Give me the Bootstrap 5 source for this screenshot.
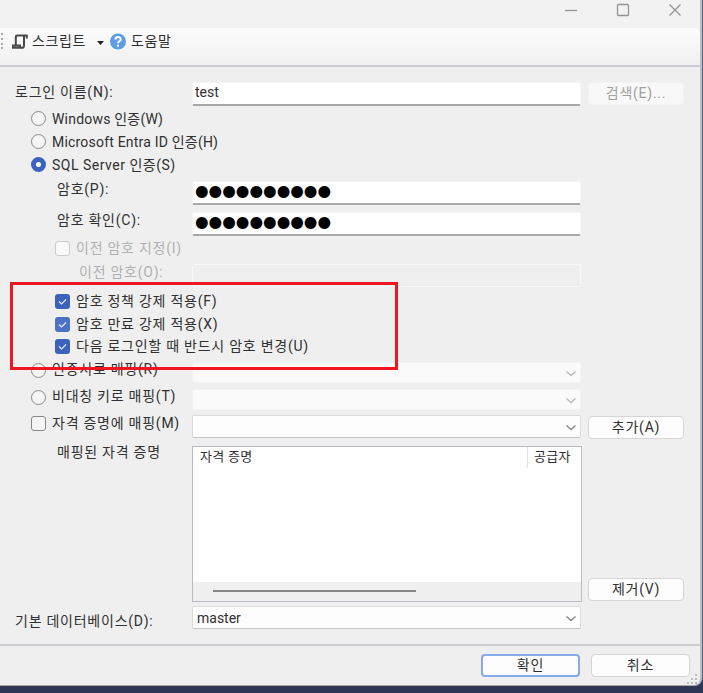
<!DOCTYPE html>
<html lang="ko">
<head>
<meta charset="utf-8">
<meta name="viewport" content="width=device-width, initial-scale=1">
<title>로그인 속성</title>
<link href="https://cdn.jsdelivr.net/npm/bootstrap@5.3.0/dist/css/bootstrap.min.css" rel="stylesheet">
<style>
body{width:703px;height:693px;overflow:hidden;background:#2d3653;font:14px/20px Roboto,"Noto Sans CJK KR",sans-serif;color:#303030;white-space:nowrap}
.win{width:702px;height:686px;background:#efefef;border-right:2px solid #bdbdc3;border-bottom:1px solid #a5a7ad;border-bottom-right-radius:8px;box-shadow:1px 0 #5d6585}
.titlebar{height:28px;background:#f2f2f2;padding-right:18px;gap:38px}
.tools{height:37px;background:linear-gradient(#fcfcfc,#f0f0f0);border-top-right-radius:5px;padding:0 0 11px 1px}
.main{height:581px;border-top:2px solid #cbcbd1;border-bottom:2px solid #cdced2;padding:13px 0 0 15px}
.line{display:flex;align-items:center}
.cap{width:177px;flex:none;letter-spacing:.75px}
.cap.n1{letter-spacing:.2px}.cap.n2{letter-spacing:.5px}
.up{padding-bottom:7px}
.first{padding-bottom:3px}
.i1{padding-left:16px}.i2{padding-left:42px}.i3{padding-left:40px}.i4{padding-left:64px}
.h27{height:27px}.h23{height:23px}.h22{height:22px}.h31{height:31px}.h18{height:18px}
.field{width:389px;height:24px;flex:none;background:#fff;border:1px solid #f5f5f5;border-bottom:2px solid #a9a9a9;border-radius:2px;padding-left:2px;line-height:18px}
.field.off{background:#efefef;border:1px solid #f8f8f8;height:23px}
.combo{width:389px;height:23px;flex:none;background:#fdfdfd;border:1px solid #dadada;border-bottom-color:#c4c4c4;border-radius:2px;padding:0 3px 0 4px;display:flex;justify-content:space-between;align-items:center;line-height:18px}
.combo.off{background:#fafafa;border-color:#f4f4f4;height:21px}
.combo svg{flex:none;margin-top:2px}
.pwd{font:15.6px/18px "DejaVu Sans",sans-serif;color:#000}
.pb{width:96px;height:23px;padding:0 0 2px;margin-left:7px;background:#fdfdfd;border:1px solid #d5d5d5;border-radius:4px;font-size:14px;line-height:20px;letter-spacing:.75px;color:#303030;flex:none}
.pb.off{background:#f8f8f8;border-color:#f3f3f3;color:#a0a0a0}
.rd,.ck{width:15px;height:15px;border:1px solid #888;border-radius:50%;background:#f5f5f5;margin-right:6px;flex:none}
.ck{border-radius:3px;margin-top:1px}
.rd.on{border:5px solid #3c62bd;background:#fff}
.ck.on{border:0;background:#3d62bb}.ck.mid{background:#4b72c4}
.ck svg{display:block}
.ck.off{border-color:#ccc;background:#f9f9f9}
.dim{color:#b1b1b1}
.grid{width:390px;height:156px;background:#fff;border:1px solid #b9bac4;font-size:13px;line-height:19px;letter-spacing:.3px}
.ghead{height:21px;padding-left:7px}
.gcol{width:54px;border-left:1px solid #e2e2e2;padding-left:6px}
.gscroll{height:19px;background:#f0f0f0;padding:8px 0 0 20px}
.thumb{width:203px;height:2px;background:#868686}
.foot{height:39px;padding:0 10px 0 0}
.foot .pb{width:99px;margin-left:11px}
.pb.def{border:2px solid #86a9e8;line-height:18px}
.box{left:10px;top:282px;width:388px;height:88px;border:3px solid #ee1620}
.grip{right:2px;top:674px}
.pwsec{padding-top:1px}
.pwold{height:29px;margin:4px 0 -2px}
.polsec{padding-top:1px}
.mapsec{padding-top:2px}
.mapsec .rd{margin-top:2px}
.add{margin-top:2px}
.listrow{margin-top:6px}
.listrow .cap{margin-top:-4px}
.rem{margin-bottom:1px;margin-left:6px}
.dbrow{height:23px;margin-top:4px}
.dbl{padding-top:6px}
.t1{letter-spacing:.6px}
.scr{margin-left:3px}.arr{margin-left:11px}.help{margin:0 5px}
</style>
<script src="https://cdn.jsdelivr.net/npm/bootstrap@5.3.0/dist/js/bootstrap.bundle.min.js"></script>
</head>
<body>
<div class="win position-relative">
  <div class="titlebar d-flex justify-content-end align-items-center">
    <svg width="14" height="14" class="mb-2" fill="none" stroke="#949494" stroke-width="1.3"><path d="M1 7.5h12"/></svg>
    <svg width="14" height="14" class="mb-2" fill="none" stroke="#949494" stroke-width="1.3"><rect x="1.5" y="1.5" width="11" height="11" rx="1"/></svg>
    <svg width="14" height="14" class="mb-2" fill="none" stroke="#949494" stroke-width="1.3"><path d="m1.5 1.5 11 11m0-11-11 11"/></svg>
  </div>
  <div class="tools d-flex align-items-center">
    <svg width="3" height="18" fill="#aaa"><path d="M0 1h2v2H0zm0 5h2v2H0zm0 5h2v2H0zm0 4h2v2H0z"/></svg>
    <svg width="17" height="17" viewBox="0 0 17 17" class="ms-2" fill="none" stroke="#484848" stroke-width="2"><path d="M14.8 5.4V2.5H5.2c-1 0-1.4.5-1.4 1.4V12M12 3v9.4c0 1.6-.7 2.4-2.2 2.4H1V12.6h7v1.9"/></svg>
    <span class="t1 scr">스크립트</span>
    <svg width="7" height="4" class="mt-1 arr"><path d="M0 0h7L3.5 4z" fill="#222"/></svg>
    <svg width="17" height="17" viewBox="0 0 17 17" class="help"><circle cx="9" cy="8.5" r="8" fill="#5d9de3"/><path d="M6.4 6.6C6.4 3.1 11.7 3 11.7 6.2c0 2-2.7 2-2.7 4M9 11.7v2" fill="none" stroke="#fff" stroke-width="2"/></svg>
    <span class="t1">도움말</span>
  </div>
  <div class="main">
    <div class="line h27"><div class="cap first">로그인 이름(N):</div><div class="field">test</div><button class="btn pb off">검색(E)...</button></div>
    <div class="line h23"><div class="cap line i1 n1"><i class="rd"></i>Windows 인증(W)</div></div>
    <div class="line h23"><div class="cap line i1 n1"><i class="rd"></i>Microsoft Entra ID 인증(H)</div></div>
    <div class="line h23"><div class="cap line i1 n2"><i class="rd on"></i>SQL Server 인증(S)</div></div>
    <div class="pwsec">
      <div class="line h31"><div class="cap up i2">암호(P):</div><div class="field pwd">●●●●●●●●●●</div></div>
      <div class="line h31"><div class="cap up i2">암호 확인(C):</div><div class="field pwd">●●●●●●●●●●</div></div>
      <div class="line h18 dim"><div class="cap line i3"><i class="ck off"></i>이전 암호 지정(I)</div></div>
      <div class="line dim pwold"><div class="cap up i4">이전 암호(O):</div><div class="field off"></div></div>
      <div class="polsec">
        <div class="line h23"><div class="cap line i3"><i class="ck on"><svg width="15" height="15" fill="none" stroke="#e1e9fa" stroke-width="1.2"><path d="m4 7.5 2.5 2.5L11 5.5"/></svg></i>암호 정책 강제 적용(F)</div></div>
        <div class="line h23"><div class="cap line i3"><i class="ck on mid"><svg width="15" height="15" fill="none" stroke="#e1e9fa" stroke-width="1.2"><path d="m4 7.5 2.5 2.5L11 5.5"/></svg></i>암호 만료 강제 적용(X)</div></div>
        <div class="line h22"><div class="cap line i3"><i class="ck on"><svg width="15" height="15" fill="none" stroke="#e1e9fa" stroke-width="1.2"><path d="m4 7.5 2.5 2.5L11 5.5"/></svg></i>다음 로그인할 때 반드시 암호 변경(U)</div></div>
      </div>
    </div>
    <div class="mapsec">
      <div class="line h27"><div class="cap line up i1"><i class="rd"></i>인증서로 매핑(R)</div><div class="combo off"><span></span><svg width="12" height="8" fill="none" stroke="#b9b9b9" stroke-width="1.4"><path d="m1.5 1.5 4.5 4 4.5-4"/></svg></div></div>
      <div class="line h27"><div class="cap line up i1"><i class="rd"></i>비대칭 키로 매핑(T)</div><div class="combo off"><span></span><svg width="12" height="8" fill="none" stroke="#b9b9b9" stroke-width="1.4"><path d="m1.5 1.5 4.5 4 4.5-4"/></svg></div></div>
      <div class="line h27"><div class="cap line up i1"><i class="ck"></i>자격 증명에 매핑(M)</div><div class="combo"><span></span><svg width="12" height="8" fill="none" stroke="#888" stroke-width="1.4"><path d="m1.5 1.5 4.5 4 4.5-4"/></svg></div><button class="btn pb add">추가(A)</button></div>
    </div>
    <div class="d-flex listrow">
      <div class="cap i2">매핑된 자격 증명</div>
      <div class="grid d-flex flex-column justify-content-between">
        <div class="ghead d-flex justify-content-between"><span>자격 증명</span><span class="gcol">공급자</span></div>
        <div class="gscroll"><div class="thumb"></div></div>
      </div>
      <button class="btn pb align-self-end rem">제거(V)</button>
    </div>
    <div class="line dbrow"><div class="cap dbl">기본 데이터베이스(D):</div><div class="combo"><span>master</span><svg width="12" height="8" fill="none" stroke="#888" stroke-width="1.4"><path d="m1.5 1.5 4.5 4 4.5-4"/></svg></div></div>
  </div>
  <div class="foot d-flex justify-content-end align-items-center"><button class="btn pb def">확인</button><button class="btn pb">취소</button></div>
  <div class="box position-absolute"></div>
  <svg class="grip position-absolute" width="11" height="11" fill="#bbb"><path d="M8 0h2v2H8zM4 4h2v2H4zm4 0h2v2H8zM0 8h2v2H0zm4 0h2v2H4zm4 0h2v2H8z"/></svg>
</div>
</body>
</html>
